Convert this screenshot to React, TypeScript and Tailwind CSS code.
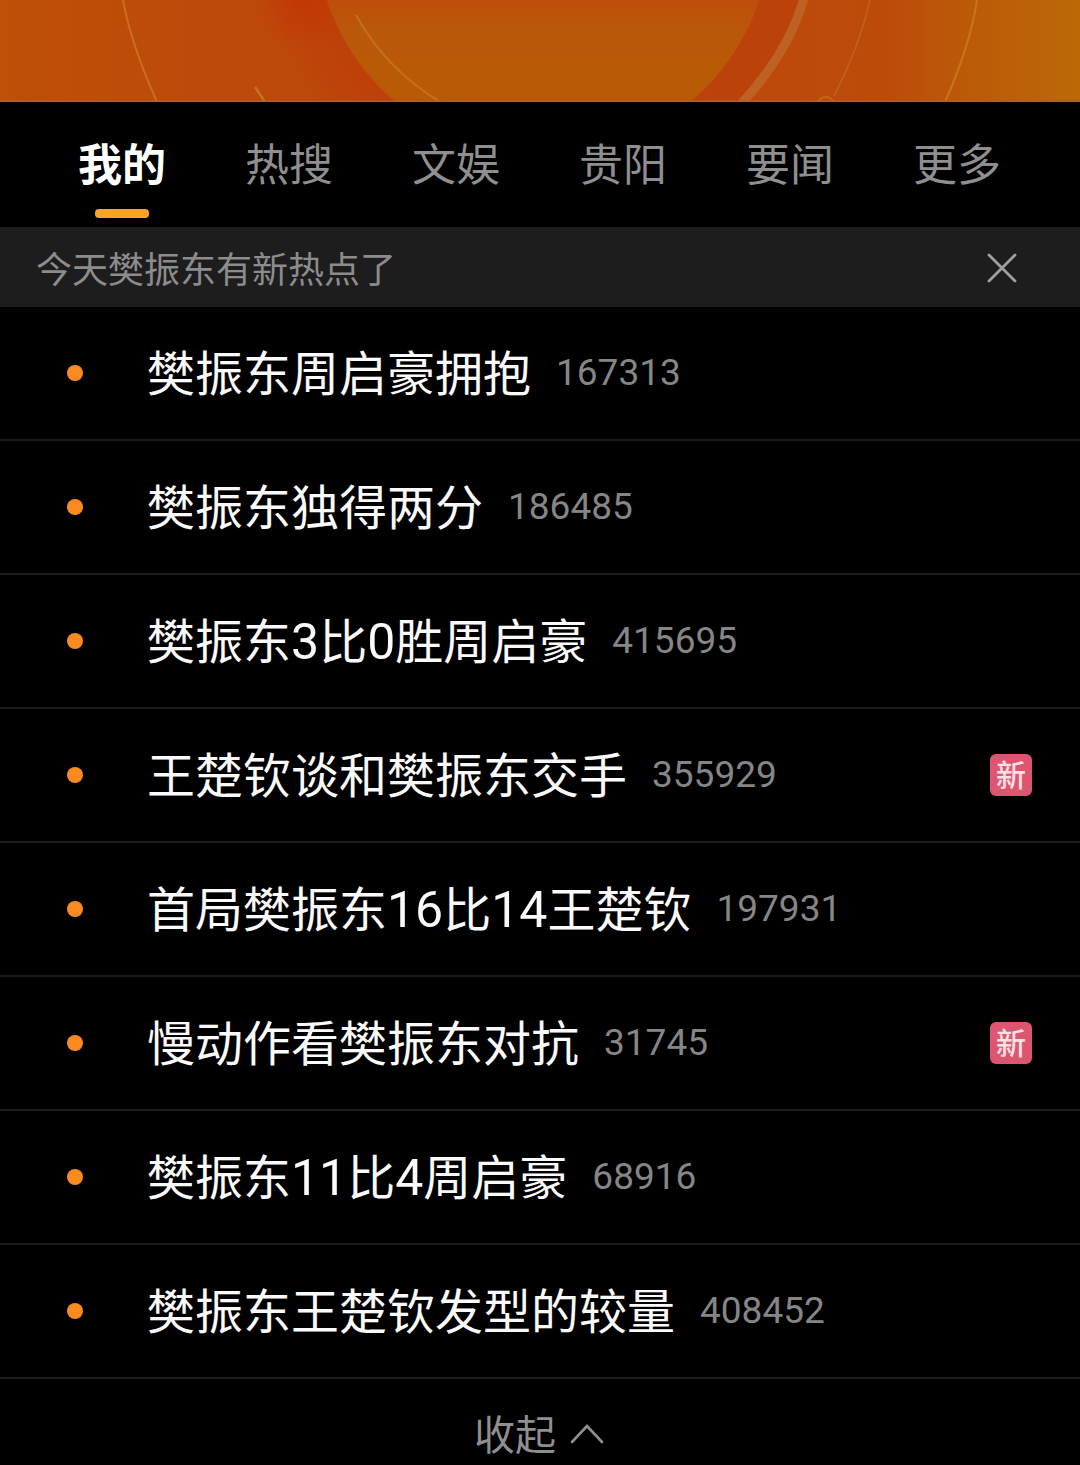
import React, { useState } from 'react';

interface Topic {
  id: number;
  title: string;
  heat: number;
  isNew?: boolean;
}

const tabs = ['我的', '热搜', '文娱', '贵阳', '要闻', '更多'];

const topics: Topic[] = [
  { id: 1, title: '樊振东周启豪拥抱', heat: 167313 },
  { id: 2, title: '樊振东独得两分', heat: 186485 },
  { id: 3, title: '樊振东3比0胜周启豪', heat: 415695 },
  { id: 4, title: '王楚钦谈和樊振东交手', heat: 355929, isNew: true },
  { id: 5, title: '首局樊振东16比14王楚钦', heat: 197931 },
  { id: 6, title: '慢动作看樊振东对抗', heat: 31745, isNew: true },
  { id: 7, title: '樊振东11比4周启豪', heat: 68916 },
  { id: 8, title: '樊振东王楚钦发型的较量', heat: 408452 },
];

const Banner: React.FC = () => (
  <div className="h-[102px] w-full overflow-hidden bg-[#bd4c0a]">
    <svg width="1080" height="102" viewBox="0 0 1080 102" fill="none">
      <defs>
        <linearGradient id="base" x1="0" y1="0" x2="1080" y2="0" gradientUnits="userSpaceOnUse">
          <stop offset="0" stopColor="#be5008" />
          <stop offset="0.2" stopColor="#bd490a" />
          <stop offset="0.5" stopColor="#be470a" />
          <stop offset="0.82" stopColor="#bc4b0a" />
          <stop offset="0.9" stopColor="#bb5b08" />
          <stop offset="1" stopColor="#bb6807" />
        </linearGradient>
        <linearGradient id="disc" x1="0" y1="0" x2="0" y2="60" gradientUnits="userSpaceOnUse">
          <stop offset="0" stopColor="#bd4e0c" />
          <stop offset="0.5" stopColor="#bb570a" />
          <stop offset="1" stopColor="#b95a07" />
        </linearGradient>
        <radialGradient id="ring" cx="543" cy="-72" r="285" gradientUnits="userSpaceOnUse">
          <stop offset="0.8" stopColor="#be3e08" stopOpacity="0.8" />
          <stop offset="0.9" stopColor="#be3e08" stopOpacity="0.6" />
          <stop offset="1" stopColor="#be4008" stopOpacity="0" />
        </radialGradient>
        <radialGradient id="glow" cx="302" cy="0" r="50" gradientUnits="userSpaceOnUse">
          <stop offset="0" stopColor="#c43404" stopOpacity="0.7" />
          <stop offset="1" stopColor="#c43404" stopOpacity="0" />
        </radialGradient>
      </defs>
      <rect width="1080" height="102" fill="url(#base)" />
      <path d="M0 0H543V102H0Z" fill="url(#ring)" />
      <circle cx="302" cy="0" r="50" fill="url(#glow)" />
      <path d="M543 0H804Q789 52 741 102H543Z" fill="#bb430b" />
      <circle cx="543" cy="-72" r="228" fill="url(#disc)" />
      <path d="M123 0Q131 44 157 102" stroke="#c8701c" strokeWidth="2" />
      <path d="M255 87L265 102" stroke="#c4761c" strokeWidth="2.5" />
      <path d="M356 15Q385 68 440 102" stroke="#c4701a" strokeWidth="2.2" />
      <path d="M804 -2Q789 52 741 104" stroke="#bd6125" strokeWidth="9" />
      <path d="M870 0Q859 48 834 96" stroke="#c25f1b" strokeWidth="1.8" />
      <circle cx="826" cy="106" r="9" stroke="#c4681c" strokeWidth="1.8" />
      <path d="M977 0Q970 46 945 102" stroke="#c9761b" strokeWidth="2" />
      <rect y="100.5" width="1080" height="1.5" fill="#a95f38" />
    </svg>
  </div>
);

// Digits use a narrower face than the Chinese glyphs around them
const TopicTitle: React.FC<{ text: string }> = ({ text }) => (
  <span className="pb-1.5 text-[48px] leading-[60px] text-[#fafafa]">
    {text.split(/(\d+)/).map((part, index) =>
      /\d/.test(part) ? (
        <span key={index} className="font-['Roboto',sans-serif] text-[50px] leading-none">
          {part}
        </span>
      ) : (
        part
      )
    )}
  </span>
);

const TopicRow: React.FC<{ topic: Topic }> = ({ topic }) => (
  <li className="flex h-[134px] items-center border-b-2 border-[#1c1c1c] pr-12 pl-[67px]">
    <span className="size-4 shrink-0 rounded-full bg-[#fb8b21]" />
    <span className="ml-16 flex items-center whitespace-nowrap">
      <TopicTitle text={topic.title} />
      <span className="ml-[25px] font-['Roboto',sans-serif] text-[37px] leading-[44px] text-[#868686]">
        {topic.heat}
      </span>
    </span>
    {topic.isNew && (
      <span className="ml-auto flex size-[42px] items-center justify-center rounded-md bg-[#dc5670] pb-1 text-[30px] leading-none font-medium text-[#fbe0e4]">
        新
      </span>
    )}
  </li>
);

const App: React.FC = () => {
  const [activeTab, setActiveTab] = useState(0);
  const [showNotice, setShowNotice] = useState(true);

  return (
    <div className="h-[1465px] w-[1080px] overflow-hidden bg-black font-['Noto_Sans_CJK_SC',sans-serif]">
      <Banner />

      <nav className="flex h-[125px] justify-between pt-[30px] pr-[79px] pl-[78px]">
        {tabs.map((tab, index) => (
          <button
            key={tab}
            onClick={() => setActiveTab(index)}
            className={`flex flex-col items-center text-[44px] leading-[60px] ${
              index === activeTab ? 'font-bold text-white' : 'text-[#8f8f8f]'
            }`}
          >
            {tab}
            {index === activeTab && <span className="mt-[17px] h-[9px] w-[54px] rounded bg-[#f9a424]" />}
          </button>
        ))}
      </nav>

      {showNotice && (
        <div className="flex h-20 items-center justify-between bg-[#1d1d1d] pr-[63px] pl-9">
          <p className="text-[36px] leading-[48px] text-[#8c8c8c]">今天樊振东有新热点了</p>
          <button className="pt-0.5" onClick={() => setShowNotice(false)} aria-label="关闭">
            <svg width="30" height="30" viewBox="0 0 30 30" fill="none">
              <path d="M2 2L28 28M28 2L2 28" stroke="#a0a0a0" strokeWidth="2.8" strokeLinecap="round" />
            </svg>
          </button>
        </div>
      )}

      <ul>
        {topics.map((topic) => (
          <TopicRow key={topic.id} topic={topic} />
        ))}
      </ul>

      <div className="flex h-[109px] items-center justify-center gap-[14px] pr-0.5 text-[#8f8f8f]">
        <span className="pb-1 text-[41px] leading-[60px]">收起</span>
        <svg width="34" height="20" viewBox="0 0 34 20" fill="none">
          <path d="M2 18L17 2L32 18" stroke="currentColor" strokeWidth="2.6" strokeLinecap="round" />
        </svg>
      </div>
    </div>
  );
};

export default App;
